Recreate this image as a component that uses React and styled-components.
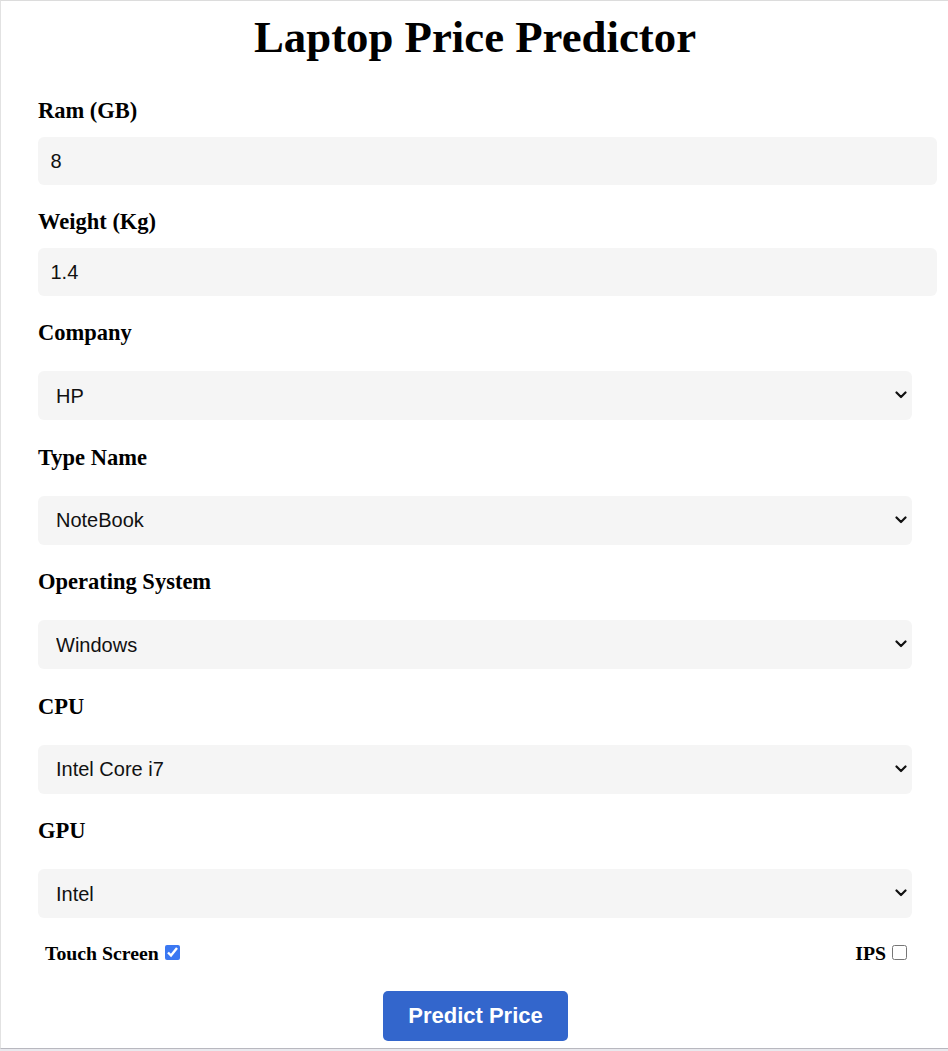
import React, { useState } from "react";
import styled, { createGlobalStyle } from "styled-components";

const Global = createGlobalStyle`
  html, body { margin: 0; padding: 0; background: #e9e9ee; }
  body { font-family: "Liberation Serif", "Times New Roman", serif; }
`;

const Frame = styled.div`
  width: 948px;
  height: 1051px;
  overflow: hidden;
  background: #e9e9ee;
`;

const Card = styled.div`
  box-sizing: border-box;
  height: 1049px;
  background: #fff;
  border-top: 1px solid #dcdcdc;
  border-left: 1px solid #e2e2e2;
  border-bottom: 1px solid #b8b8bf;
  padding: 10px 36px 0 37px;
  display: flex;
  flex-direction: column;
  overflow: hidden;
`;

const Title = styled.h1`
  margin: 0 0 35px;
  font-family: "Liberation Serif", "Times New Roman", serif;
  font-weight: 700;
  font-size: 44.8px;
  line-height: 52px;
  text-align: center;
  color: #000;
`;

const Group = styled.div`
  display: flex;
  flex-direction: column;
  margin-bottom: ${(p) => (p.$select ? "24.5px" : "24px")};
`;

const Label = styled.label`
  font-family: "Liberation Serif", "Times New Roman", serif;
  font-weight: 700;
  font-size: 22.5px;
  line-height: 26px;
  color: #000;
  margin-bottom: ${(p) => (p.$select ? "25px" : "13px")};
`;

const TextInput = styled.input`
  box-sizing: content-box;
  width: 100%;
  height: 48px;
  padding: 0 12.5px;
  margin: 0;
  border: none;
  border-radius: 6px;
  background: #f5f5f5;
  font-family: "Liberation Sans", Arial, sans-serif;
  font-size: 20px;
  color: #111;
  outline: none;
`;

const SelectWrap = styled.div`
  position: relative;
  height: 49px;
`;

const Select = styled.select`
  appearance: none;
  -webkit-appearance: none;
  box-sizing: border-box;
  width: 100%;
  height: 49px;
  padding: 0 36px 0 18px;
  margin: 0;
  border: none;
  border-radius: 6px;
  background: #f5f5f5;
  font-family: "Liberation Sans", Arial, sans-serif;
  font-size: 20px;
  color: #111;
  outline: none;
`;

const Chevron = styled.svg`
  position: absolute;
  right: 5px;
  top: 20px;
  width: 12px;
  height: 8px;
  pointer-events: none;
`;

const CheckRow = styled.div`
  display: flex;
  justify-content: space-between;
  align-items: center;
  padding: 0 5px 0 7px;
  margin: -1px 0 27px;
`;

const CheckLabel = styled.label`
  display: flex;
  align-items: center;
  gap: 6px;
  font-family: "Liberation Serif", "Times New Roman", serif;
  font-weight: 700;
  font-size: 19.8px;
  line-height: 22px;
  color: #000;
`;

const Check = styled.input`
  width: 15px;
  height: 15px;
  margin: 0;
  accent-color: #3b78f2;
`;

const ButtonRow = styled.div`
  display: flex;
  justify-content: center;
  padding-left: 1px;
`;

const Button = styled.button`
  height: 50px;
  padding: 0 25px;
  border: none;
  border-radius: 5px;
  background: #3366cc;
  color: #fff;
  font-family: "Liberation Sans", Arial, sans-serif;
  font-weight: 700;
  font-size: 22px;
  cursor: pointer;
`;

const selects = [
  { label: "Company", value: "HP", options: ["Apple", "HP", "Dell", "Lenovo", "Asus", "Acer", "MSI"] },
  { label: "Type Name", value: "NoteBook", options: ["NoteBook", "Ultrabook", "Gaming", "2 in 1 Convertible", "Workstation"] },
  { label: "Operating System", value: "Windows", options: ["Windows", "Mac", "Linux", "Others"] },
  { label: "CPU", value: "Intel Core i7", options: ["Intel Core i3", "Intel Core i5", "Intel Core i7", "AMD Processor", "Other"] },
  { label: "GPU", value: "Intel", options: ["Intel", "Nvidia", "AMD"] },
];

export default function App() {
  const [ram, setRam] = useState("8");
  const [weight, setWeight] = useState("1.4");
  const [touch, setTouch] = useState(true);
  const [ips, setIps] = useState(false);
  return (
    <Frame>
      <Global />
      <Card>
        <Title>Laptop Price Predictor</Title>
        <Group>
          <Label>Ram (GB)</Label>
          <TextInput value={ram} onChange={(e) => setRam(e.target.value)} />
        </Group>
        <Group>
          <Label>Weight (Kg)</Label>
          <TextInput value={weight} onChange={(e) => setWeight(e.target.value)} />
        </Group>
        {selects.map((s) => (
          <Group key={s.label} $select>
            <Label $select>{s.label}</Label>
            <SelectWrap>
              <Select defaultValue={s.value}>
                {s.options.map((o) => (
                  <option key={o}>{o}</option>
                ))}
              </Select>
              <Chevron viewBox="0 0 12 8">
                <path d="M1.5 1.5 L6 6 L10.5 1.5" fill="none" stroke="#111" strokeWidth="2.2" strokeLinecap="round" strokeLinejoin="round" />
              </Chevron>
            </SelectWrap>
          </Group>
        ))}
        <CheckRow>
          <CheckLabel>
            Touch Screen
            <Check type="checkbox" checked={touch} onChange={(e) => setTouch(e.target.checked)} />
          </CheckLabel>
          <CheckLabel>
            IPS
            <Check type="checkbox" checked={ips} onChange={(e) => setIps(e.target.checked)} />
          </CheckLabel>
        </CheckRow>
        <ButtonRow>
          <Button>Predict Price</Button>
        </ButtonRow>
      </Card>
    </Frame>
  );
}
